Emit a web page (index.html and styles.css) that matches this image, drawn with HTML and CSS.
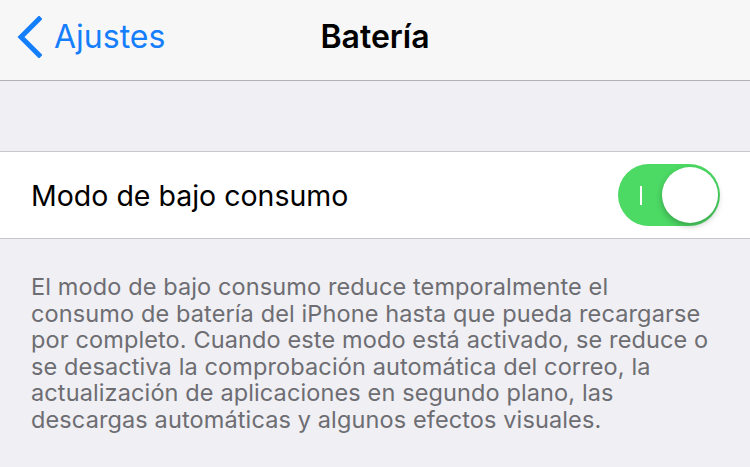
FILE: index.html
```html
<!DOCTYPE html>
<html lang="es">
<head>
    <meta charset="UTF-8">
    <title>Batería</title>
    <link rel="stylesheet" href="styles.css">
</head>
<body>
<div class="nav">
    <a class="navBack" href="#">
        <svg class="chevron" width="26" height="42" viewBox="0 0 26 42">
            <path d="M23 3 L5 21 L23 39" fill="none" stroke="#157efb" stroke-width="5" stroke-linecap="square"/>
        </svg>
        <span>Ajustes</span>
    </a>
    <div class="navTitle">Batería</div>
    <div></div>
</div>
<div class="gap"></div>
<div class="cell">
    <div class="cellLabel">Modo de bajo consumo</div>
    <label class="switch on">
        <span class="switchMark"></span>
        <span class="switchKnob"></span>
    </label>
</div>
<p class="footer">El modo de bajo consumo reduce temporalmente el<br>
consumo de batería del iPhone hasta que pueda recargarse<br>
por completo. Cuando este modo está activado, se reduce o<br>
se desactiva la comprobación automática del correo, la<br>
actualización de aplicaciones en segundo plano, las<br>
descargas automáticas y algunos efectos visuales.</p>
</body>
</html>
```

FILE: styles.css
```css
body{
    margin:0;
    padding:0;
    background:#efeff4;
    font-family:Inter,"Noto Sans",sans-serif;
    width:750px;
    height:467px;
    overflow:hidden;
}
.nav{
    display:grid;
    grid-template-columns:1fr auto 1fr;
    align-items:center;
    height:73px;
    padding-bottom:7px;
    background:#f7f7f8;
    border-bottom:1px solid #b2b2b2;
}
.navBack{
    display:flex;
    align-items:center;
    color:#157efb;
    text-decoration:none;
    font-size:32px;
    padding-left:16px;
}
.chevron{
    margin-right:12px;
}
.navTitle{
    font-size:32px;
    font-weight:600;
    color:#000;
}
.gap{
    height:70px;
}
.cell{
    display:flex;
    align-items:center;
    justify-content:space-between;
    height:86px;
    background:#fff;
    border-top:1px solid #c8c7cc;
    border-bottom:1px solid #c8c7cc;
    padding:0 30px 0 31px;
}
.cellLabel{
    font-size:28.5px;
    color:#000;
}
.switch{
    position:relative;
    width:102px;
    height:62px;
    border-radius:31px;
    background:#4cd964;
}
.switchMark{
    position:absolute;
    left:22px;
    top:22px;
    width:2px;
    height:19px;
    background:#fff;
}
.switchKnob{
    position:absolute;
    right:2px;
    top:3px;
    width:56px;
    height:56px;
    border-radius:50%;
    background:#fff;
    box-shadow:0 3px 6px rgba(0,0,0,0.25);
}
.footer{
    margin:0;
    padding:35px 31px 0;
    font-size:23.5px;
    line-height:26.6px;
    letter-spacing:0.12px;
    color:#6d6d72;
    white-space:nowrap;
}
```
